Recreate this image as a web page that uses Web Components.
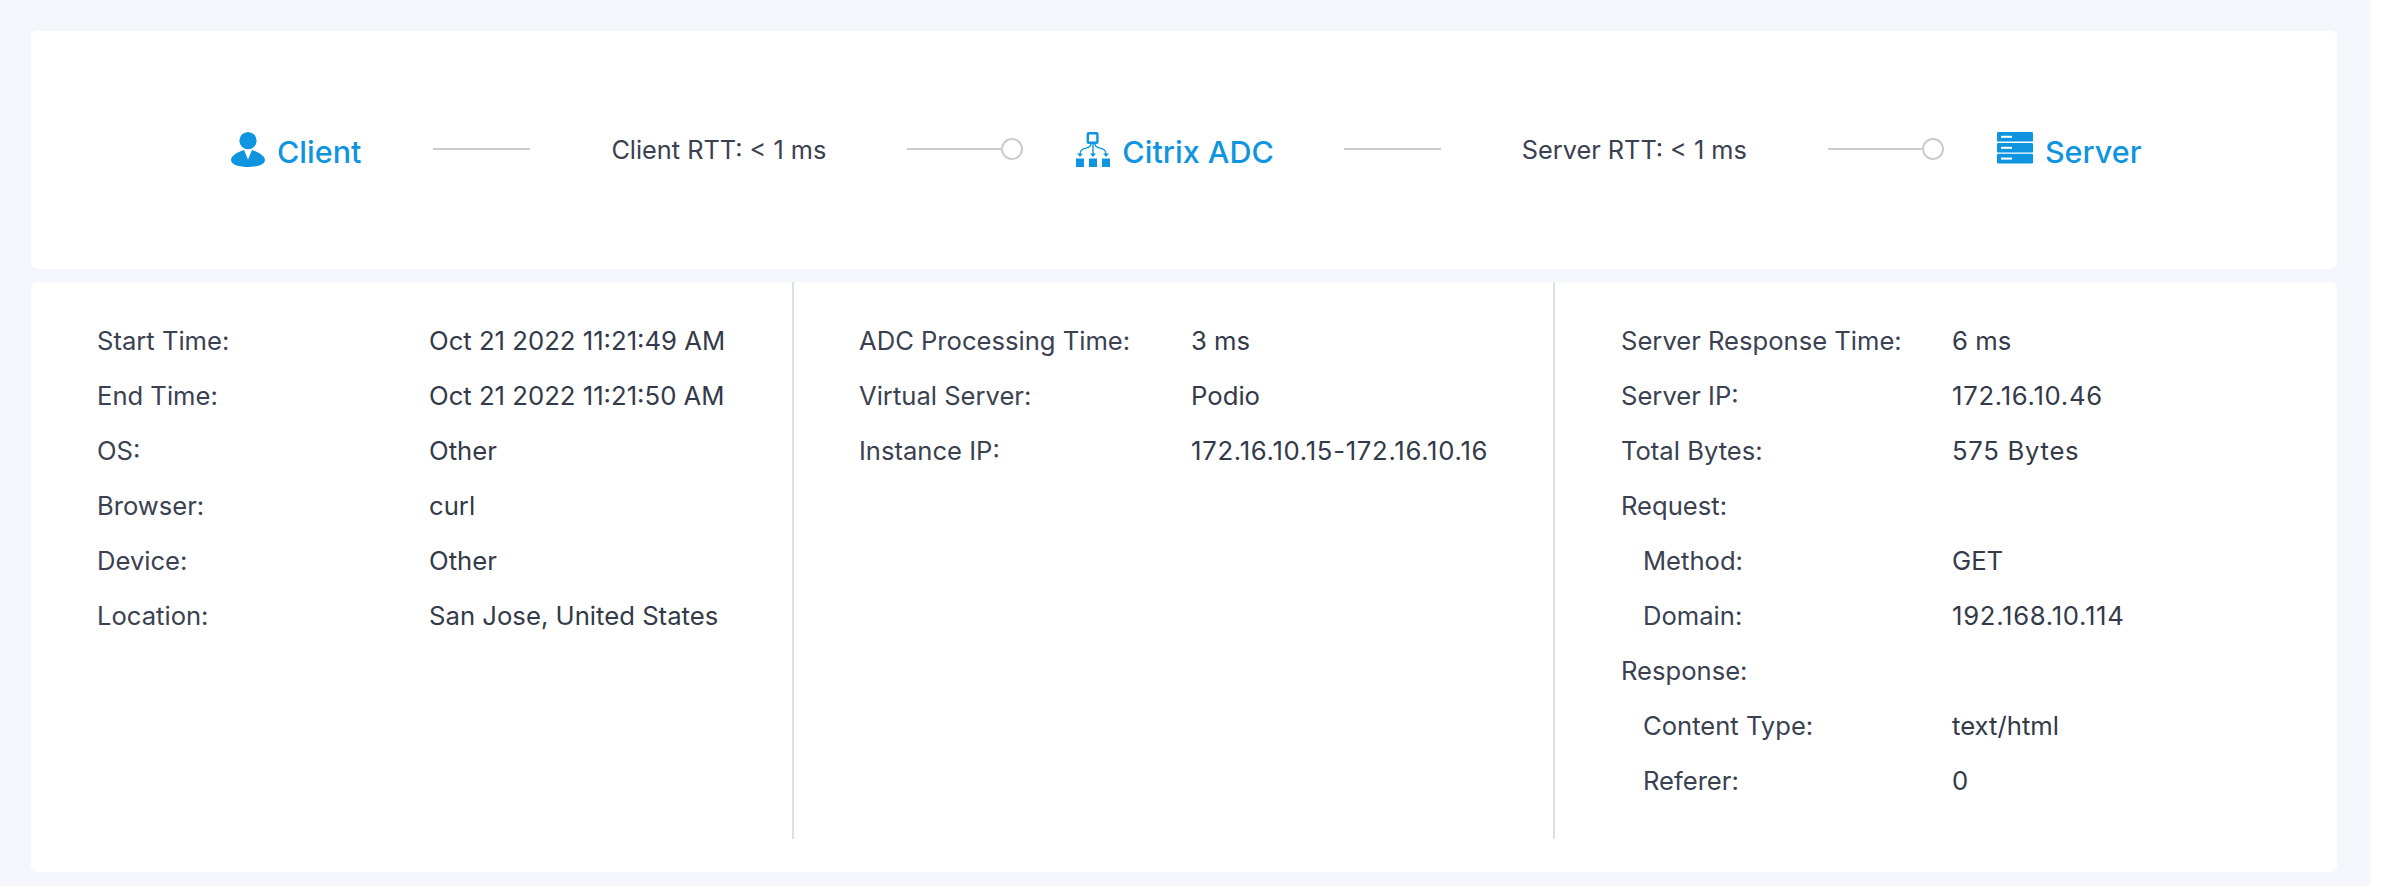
<!DOCTYPE html>
<html>
<head>
<meta charset="utf-8">
<style>
    html, body { margin: 0; background: #ffffff; }
    body { font-family: Inter, "Noto Sans", sans-serif; color: #3a4150; }
</style>
</head>
<body>
<trace-page>
    <trace-flow>
        <flow-node name="Client">
            <svg slot="icon" width="34" height="35" viewBox="0 0 34 35"><circle cx="17" cy="8.7" r="8.6" fill="#0f94e0"/><path fill="#0f94e0" d="M13 18L17 27.5L21 18C27 20 34 23.5 34 28C34 33 25 35 17 35C9 35 0 33 0 28C0 23.5 7 20 13 18Z"/></svg>
        </flow-node>
        <flow-link lead="72"></flow-link>
        <flow-rtt>Client RTT: &lt; 1 ms</flow-rtt>
        <flow-link dot></flow-link>
        <flow-node name="Citrix ADC">
            <svg slot="icon" width="34" height="35" viewBox="0 0 34 35">
                <rect x="11.8" y="1.2" width="9.6" height="9.6" rx="1" fill="none" stroke="#0f94e0" stroke-width="2.4"/>
                <rect x="0" y="26.5" width="8" height="8.5" fill="#0f94e0"/><rect x="13" y="26.5" width="8" height="8.5" fill="#0f94e0"/><rect x="26" y="26.5" width="8" height="8.5" fill="#0f94e0"/>
                <path fill="none" stroke="#0f94e0" stroke-width="1.4" d="M17 12V22M15 12C15 18 4 14 4 22M19 12C19 18 30 14 30 22"/>
                <path fill="#0f94e0" d="M1 21.5H7L4 25ZM14 21.5H20L17 25ZM27 21.5H33L30 25Z"/>
            </svg>
        </flow-node>
        <flow-link></flow-link>
        <flow-rtt>Server RTT: &lt; 1 ms</flow-rtt>
        <flow-link dot></flow-link>
        <flow-node name="Server">
            <svg slot="icon" width="36" height="32" viewBox="0 0 36 32" style="margin-bottom:3px">
                <rect x="0" y="0" width="36" height="9.6" rx="1.2" fill="#0f94e0"/><rect x="0" y="11" width="36" height="9.6" rx="1.2" fill="#0f94e0"/><rect x="0" y="21.8" width="36" height="9.6" rx="1.2" fill="#0f94e0"/>
                <rect x="4" y="3.8" width="11" height="2" fill="#fff"/><rect x="4" y="14.8" width="11" height="2" fill="#fff"/><rect x="4" y="25.6" width="11" height="2" fill="#fff"/>
            </svg>
        </flow-node>
    </trace-flow>
    <trace-details>
        <detail-column>
            <detail-row label="Start Time:">Oct 21 2022 11:21:49 AM</detail-row>
            <detail-row label="End Time:">Oct 21 2022 11:21:50 AM</detail-row>
            <detail-row label="OS:">Other</detail-row>
            <detail-row label="Browser:">curl</detail-row>
            <detail-row label="Device:">Other</detail-row>
            <detail-row label="Location:">San Jose, United States</detail-row>
        </detail-column>
        <detail-column>
            <detail-row label="ADC Processing Time:">3 ms</detail-row>
            <detail-row label="Virtual Server:">Podio</detail-row>
            <detail-row label="Instance IP:" wide>172.16.10.15-172.16.10.16</detail-row>
        </detail-column>
        <detail-column>
            <detail-row label="Server Response Time:">6 ms</detail-row>
            <detail-row label="Server IP:" wide>172.16.10.46</detail-row>
            <detail-row label="Total Bytes:" wide>575 Bytes</detail-row>
            <detail-row label="Request:"></detail-row>
            <detail-row label="Method:" indent>GET</detail-row>
            <detail-row label="Domain:" indent wide>192.168.10.114</detail-row>
            <detail-row label="Response:"></detail-row>
            <detail-row label="Content Type:" indent>text/html</detail-row>
            <detail-row label="Referer:" indent>0</detail-row>
        </detail-column>
    </trace-details>
</trace-page>
<script>
class TracePage extends HTMLElement {
    constructor() {
        super();
        this.attachShadow({ mode: 'open' });
    }

    connectedCallback() {
        this.shadowRoot.innerHTML = `
            <style>
                :host {
                    display: flex;
                    flex-direction: column;
                    gap: 13px;
                    box-sizing: border-box;
                    width: 2370px;
                    height: 886px;
                    padding: 31px 33px 14px 31px;
                    background-color: #f5f6fb;
                }
            </style>
            <slot></slot>
        `;
    }
}

class TraceFlow extends HTMLElement {
    constructor() {
        super();
        this.attachShadow({ mode: 'open' });
    }

    connectedCallback() {
        this.shadowRoot.innerHTML = `
            <style>
                :host {
                    display: flex;
                    align-items: center;
                    box-sizing: border-box;
                    height: 238px;
                    padding: 0 0 3px 200px;
                    background-color: #fff;
                    border-radius: 6px;
                }
            </style>
            <slot></slot>
        `;
    }
}

class FlowNode extends HTMLElement {
    constructor() {
        super();
        this.attachShadow({ mode: 'open' });
    }

    connectedCallback() {
        const name = this.getAttribute('name') || '';
        this.shadowRoot.innerHTML = `
            <style>
                :host {
                    display: flex;
                    align-items: flex-end;
                    gap: 12px;
                    margin-top: 1px;
                    color: #0f94e0;
                    font-size: 30.5px;
                    font-weight: 500;
                    line-height: 36px;
                }
                ::slotted(svg) { display: block; flex: none; }
                span { margin-bottom: -3px; }
            </style>
            <slot name="icon"></slot>
            <span>${name}</span>
        `;
    }
}

class FlowLink extends HTMLElement {
    constructor() {
        super();
        this.attachShadow({ mode: 'open' });
    }

    connectedCallback() {
        const dot = this.hasAttribute('dot');
        const lead = this.getAttribute('lead') || (dot ? '81' : '70');
        this.shadowRoot.innerHTML = `
            <style>
                :host {
                    display: flex;
                    align-items: center;
                    flex: none;
                    margin: 0 ${dot ? '53px' : '81px'} 0 ${lead}px;
                }
                .line { width: ${dot ? '94px' : '97px'}; height: 2px; background-color: #ccc; }
                .dot {
                    box-sizing: border-box;
                    width: 22px;
                    height: 22px;
                    border: 2px solid #ccc;
                    border-radius: 50%;
                    display: ${dot ? 'block' : 'none'};
                }
            </style>
            <div class="line"></div><div class="dot"></div>
        `;
    }
}

class FlowRtt extends HTMLElement {
    constructor() {
        super();
        this.attachShadow({ mode: 'open' });
    }

    connectedCallback() {
        this.shadowRoot.innerHTML = `
            <style>
                :host { display: block; flex: none; margin-top: 2px; font-size: 25.3px; line-height: 36px; white-space: nowrap; }
            </style>
            <slot></slot>
        `;
    }
}

class TraceDetails extends HTMLElement {
    constructor() {
        super();
        this.attachShadow({ mode: 'open' });
    }

    connectedCallback() {
        this.shadowRoot.innerHTML = `
            <style>
                :host {
                    display: grid;
                    grid-template-columns: 763px 761px 1fr;
                    flex: 1;
                    padding-bottom: 33px;
                    background-color: #fff;
                    border-radius: 6px;
                }
            </style>
            <slot></slot>
        `;
    }
}

class DetailColumn extends HTMLElement {
    constructor() {
        super();
        this.attachShadow({ mode: 'open' });
    }

    connectedCallback() {
        this.shadowRoot.innerHTML = `
            <style>
                :host {
                    --label-width: 332px;
                    display: flex;
                    flex-direction: column;
                    box-sizing: border-box;
                    padding: 31px 0 0 66px;
                    border-right: 2px solid #dfe0e3;
                }
                :host(:nth-child(2)) { padding-left: 65px; }
                :host(:last-child) { --label-width: 331px; border-right: none; }
            </style>
            <slot></slot>
        `;
    }
}

class DetailRow extends HTMLElement {
    constructor() {
        super();
        this.attachShadow({ mode: 'open' });
    }

    connectedCallback() {
        const label = this.getAttribute('label') || '';
        const indent = this.hasAttribute('indent');
        const wide = this.hasAttribute('wide');
        this.shadowRoot.innerHTML = `
            <style>
                :host {
                    display: grid;
                    grid-template-columns: var(--label-width) 1fr;
                    height: 55px;
                    align-items: center;
                    font-size: 25.6px;
                    white-space: nowrap;
                }
                .label { padding-left: ${indent ? '22px' : '0'}; }
                .value { color: #333a49; font-size: 25.7px; letter-spacing: ${wide ? '.7px' : '0'}; }
            </style>
            <span class="label">${label}</span>
            <span class="value"><slot></slot></span>
        `;
    }
}

customElements.define('trace-page', TracePage);
customElements.define('trace-flow', TraceFlow);
customElements.define('flow-node', FlowNode);
customElements.define('flow-link', FlowLink);
customElements.define('flow-rtt', FlowRtt);
customElements.define('trace-details', TraceDetails);
customElements.define('detail-column', DetailColumn);
customElements.define('detail-row', DetailRow);
</script>
</body>
</html>
